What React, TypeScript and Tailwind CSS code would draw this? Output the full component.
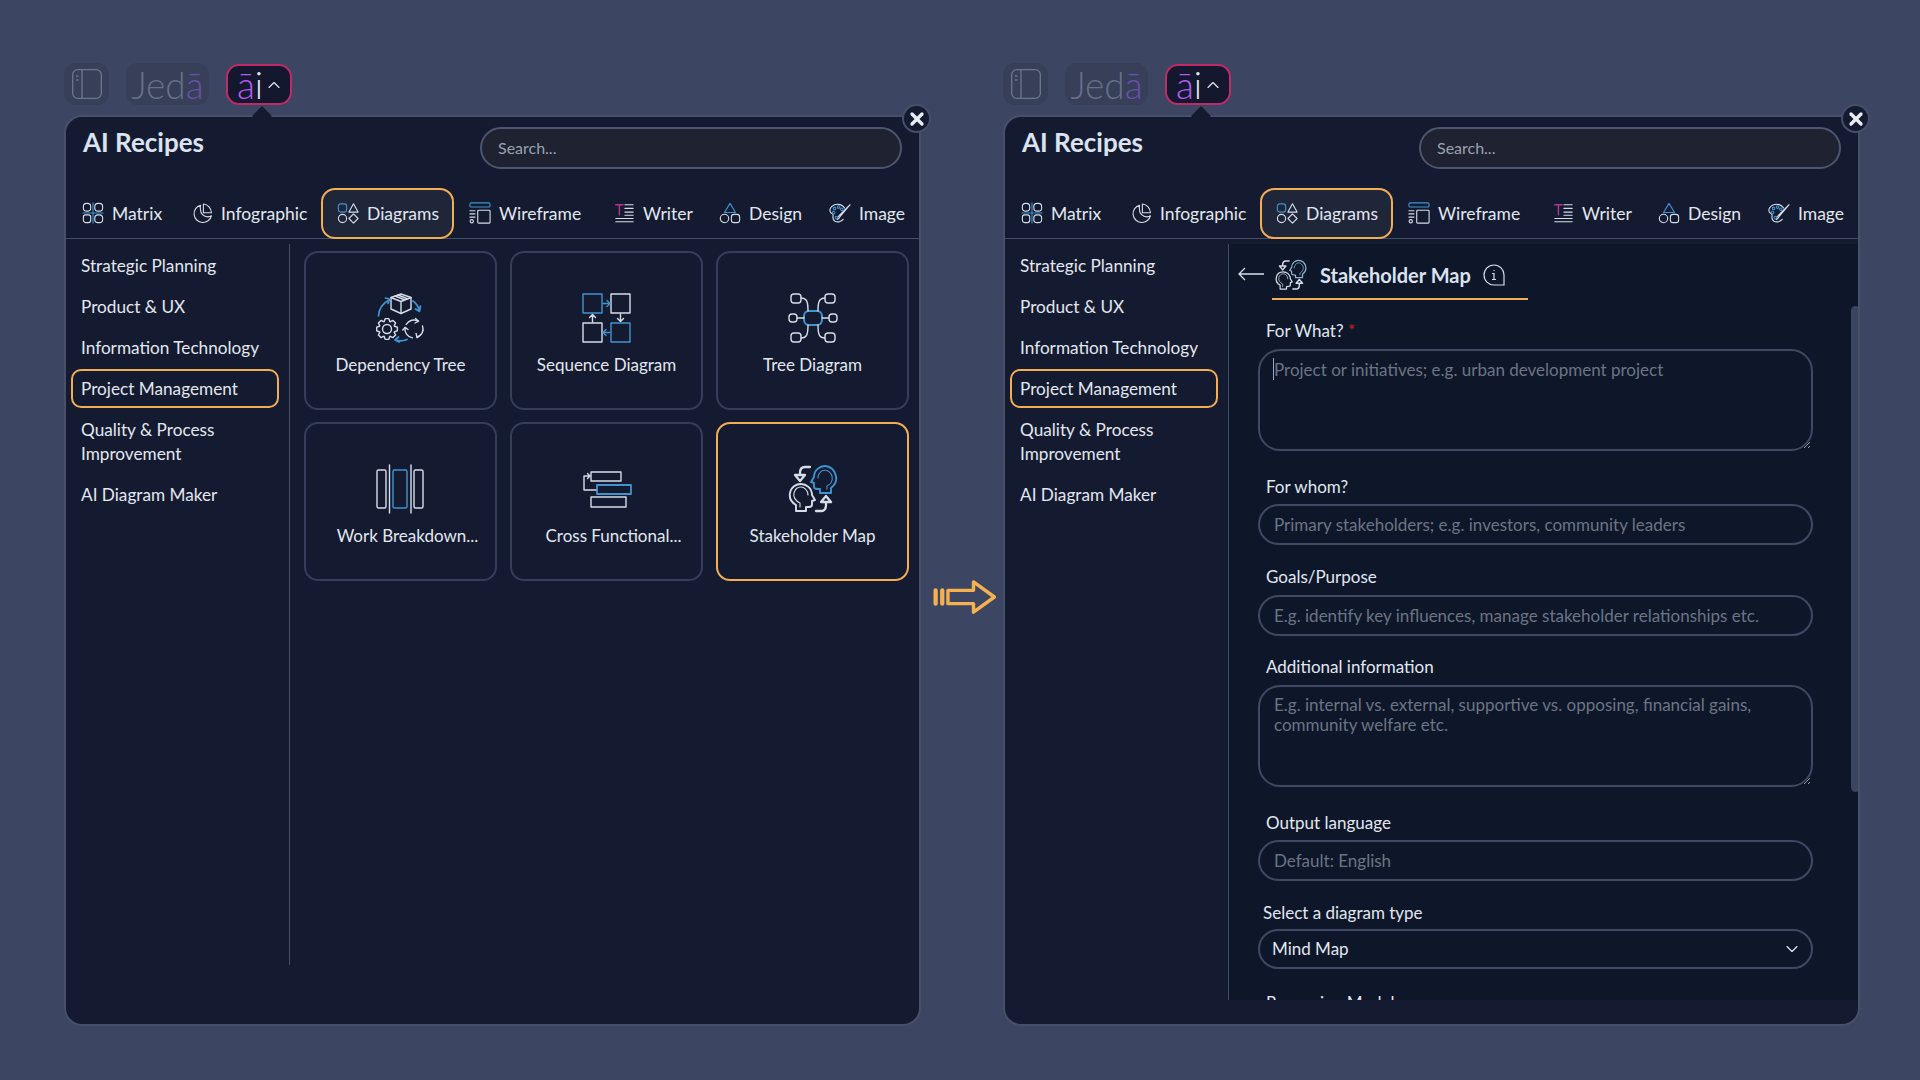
import { ChevronDown, ChevronUp, X } from "lucide-react"
import type { ReactNode } from "react"

const BLUE = "#3f93cf"
const WHITE = "#d6dde9"

function Ic({ size = 22, children }: { size?: number; children: ReactNode }) {
  return (
    <svg width={size} height={size} viewBox="0 0 24 24" fill="none" stroke={WHITE} strokeWidth="1.2" strokeLinecap="round" strokeLinejoin="round" className="shrink-0">
      {children}
    </svg>
  )
}

const MatrixIcon = () => (
  <Ic>
    <rect x="1.5" y="1.5" width="8" height="8.5" rx="3.5" />
    <rect x="14" y="1.5" width="8.5" height="8.5" rx="3.5" />
    <rect x="1.5" y="14" width="8" height="8.5" rx="2.5" />
    <rect x="14" y="14" width="8.5" height="8.5" rx="3.5" />
    <path d="M1 12h22M12 1v22" stroke={BLUE} />
  </Ic>
)
const InfographicIcon = () => (
  <Ic>
    <path d="M13.5 2.2a10 10 0 0 1 8.8 9.6h-8.8z" />
    <path d="M10.5 3.5a9.6 9.6 0 1 0 11.8 11.5 9 9 0 0 1-4 1.2 8 8 0 0 1-8-8 9 9 0 0 1 .2-4.7z" />
  </Ic>
)
const DiagramsIcon = () => (
  <Ic>
    <rect x="1.5" y="2" width="9" height="9" rx="2.5" stroke={BLUE} />
    <path d="M18 2l5 9H13z" />
    <circle cx="6" cy="18" r="4.5" />
    <path d="M18 13l5 5-5 5-5-5z" />
  </Ic>
)
const WireframeIcon = () => (
  <Ic>
    <rect x="1" y="1" width="22" height="4.5" rx="1.5" stroke={BLUE} />
    <rect x="9.5" y="9" width="13.5" height="14" rx="1" />
    <path d="M1 9.5h5.5M1 13h5.5M1 16.5h5.5" />
    <circle cx="3" cy="21" r="1.8" />
  </Ic>
)
const WriterIcon = () => (
  <Ic>
    <path d="M3 3h8M7 3v11" stroke="#b5348f" strokeWidth="1.6" />
    <path d="M13 3h9M13 7h9M13 11h9M13 14.5h9M3 18h19M3 21.5h19" />
  </Ic>
)
const DesignIcon = () => (
  <Ic>
    <path d="M12 1.5l6 10H6z" stroke={BLUE} />
    <circle cx="6" cy="18" r="4.6" />
    <rect x="13.5" y="13.5" width="9" height="9" rx="3" />
  </Ic>
)
const ImageIcon = () => (
  <Ic>
    <path d="M17 6.5C15 3 10 1.5 6 3S0 8 1.5 11c1 2 3 1.500 3 3.500S3 19 6.500 21c3 1.500 7 .5 9-2" />
    <path d="M23 3l-11 13c-.5 1.500-1 2.500-3 3 0-2 .5-3 2-4z" />
    <circle cx="6" cy="7" r="1.400" stroke={BLUE} />
    <circle cx="10.500" cy="5.500" r="1.400" stroke={BLUE} />
    <circle cx="14" cy="8" r="1.400" stroke={BLUE} />
    <circle cx="5" cy="11.500" r="1.400" stroke={BLUE} />
    <circle cx="8" cy="17" r="1.400" stroke={BLUE} />
  </Ic>
)

function Big({ children }: { children: ReactNode }) {
  return (
    <svg width="50" height="50" viewBox="0 0 50 50" fill="none" stroke={WHITE} strokeWidth="1.4" strokeLinecap="round" strokeLinejoin="round" className="shrink-0">
      {children}
    </svg>
  )
}

// outline of a cog with 8 teeth
function gearPath(cx: number, cy: number, outer: number, inner: number) {
  const pts: string[] = []
  for (let i = 0; i < 8; i++) {
    const a = (i * Math.PI) / 4
    const step = Math.PI / 8
    const list: [number, number][] = [
      [inner, a - step * 0.9],
      [outer, a - step * 0.45],
      [outer, a + step * 0.45],
      [inner, a + step * 0.9],
    ]
    list.forEach(([r, t]) => pts.push(`${(cx + r * Math.cos(t)).toFixed(2)} ${(cy + r * Math.sin(t)).toFixed(2)}`))
  }
  return `M${pts.join("L")}z`
}

const DependencyIcon = () => (
  <Big>
    <path d="M25 1l10 3.500v11.500L25 20.500 15 16V4.500z" />
    <path d="M15 4.500l10 4 10-4M25 8.500v12M19 3l10 4M22 2l10 4" />
    <path d="M13 7C7 10 3 16 2.500 23" stroke={BLUE} strokeWidth="1.700" />
    <path d="M9.500 5L13.500 6 12 10.500" stroke={BLUE} strokeWidth="1.700" />
    <path d="M37 8c3.500 2.500 5.500 6 6.500 10M44.500 13l-1 5.500-4-2.500" stroke={BLUE} strokeWidth="1.700" />
    <path d="M31 46.500c-4 1.800-8 1.800-12 .3M22.500 44l-3.500 3 4 2" stroke={BLUE} strokeWidth="1.700" />
    <path d={gearPath(11, 36, 10.500, 8)} />
    <circle cx="11" cy="36" r="4.500" />
    <path d="M30.200 31.500A9 9 0 0 1 42.500 28.200M46.500 32.900A9 9 0 0 1 41.100 44.500M36.400 44.900A9 9 0 0 1 29.100 34.400" />
    <path d="M39.500 25.500l3 2.700-3.500 1.800M45 41.500l-3.900 3-1-4M26.800 37l2.300-2.600 2.900 2.100" />
  </Big>
)
const SequenceIcon = () => (
  <Big>
    <rect x="1" y="1" width="19" height="19" stroke={BLUE} />
    <rect x="29" y="1" width="19" height="19" />
    <rect x="1" y="30" width="19" height="19" />
    <rect x="29" y="30" width="19" height="19" stroke={BLUE} />
    <path d="M21 10.500h7M25 7.500l3 3-3 3" stroke={BLUE} />
    <path d="M38.500 21v7.500M35.500 25.500l3 3 3-3" />
    <path d="M10.500 29v-7.500M7.500 24.500l3-3 3 3" />
    <path d="M28 39.500h-7M24 36.500l-3 3 3 3" stroke={BLUE} />
  </Big>
)
const TreeIcon = () => (
  <Big>
    <rect x="3" y="1" width="10" height="9" rx="3" />
    <rect x="37" y="1" width="10" height="9" rx="3" />
    <rect x="1" y="21" width="8" height="8" rx="3" />
    <rect x="41" y="21" width="8" height="8" rx="3" />
    <rect x="3" y="40" width="10" height="9" rx="3" />
    <rect x="37" y="40" width="10" height="9" rx="3" />
    <rect x="16" y="18" width="18" height="14" rx="5" stroke={BLUE} strokeWidth="2" />
    <path d="M13 5c6 0 7 4 7 13M37 5c-6 0-7 4-7 13M13 45c6 0 7-4 7-13M37 45c-6 0-7-4-7-13M9 25h7M41 25h-7" />
  </Big>
)
const WorkIcon = () => (
  <Big>
    <rect x="1" y="6" width="9" height="38" rx="1.500" />
    <rect x="17" y="6" width="14" height="38" rx="1.500" stroke={BLUE} />
    <rect x="38" y="6" width="9" height="38" rx="1.500" />
    <path d="M13.500 1v48M35 1v48" />
  </Big>
)
const CrossIcon = () => (
  <Big>
    <rect x="9" y="8" width="30" height="9" />
    <rect x="15" y="21" width="34" height="9" stroke={BLUE} strokeWidth="1.800" />
    <rect x="9" y="33" width="35" height="10" />
    <path d="M2 12v14h12M2 12h6M5.500 9.500L8 12l-2.500 2.500" />
  </Big>
)
const StakeholderIcon = ({ size = 50, dim = false }: { size?: number; dim?: boolean }) => (
  <svg width={size} height={size} viewBox="0 0 50 50" fill="none" stroke={WHITE} strokeWidth="1.900" strokeLinecap="round" strokeLinejoin="round" className="shrink-0">
    <path d="M8 47v-6C3 38 1 34 2 29c1-6 6-9 11-9s11 4 11 11l3 5-3 1v4c0 2-2 2-6 2v4z" />
    <path d="M12 43v-4c-4-2-7-5-6-10 1-4 4-6 7-6s7 3 7 8" strokeWidth="1.100" />
    <path d="M43 29v-5c4-3 6-7 5-12-1-6-6-10-11-10S26 6 26 13l-3 5 3 1v4c0 2 2 2 6 2v4z" stroke={dim ? "#8fb8d0" : BLUE} />
    <path d="M39 25v-3c4-2 6-6 5-10-1-3-4-6-7-6s-7 3-7 8" stroke={dim ? "#8fb8d0" : BLUE} strokeWidth="1.100" />
    <path d="M22 3h-5c-3 0-5 2-5 6v2M7 11l5 6 5-6z" strokeWidth="2.300" />
    <path d="M28 47h5c3 0 5-2 5-6v-3M33 38l5-6 5 6z" strokeWidth="2.300" />
  </svg>
)

const tabs = [
  { name: "Matrix", icon: <MatrixIcon />, w: "w-[109px]" },
  { name: "Infographic", icon: <InfographicIcon />, w: "w-[130px]" },
  { name: "Diagrams", icon: <DiagramsIcon />, w: "w-[148px]", active: true },
  { name: "Wireframe", icon: <WireframeIcon />, w: "w-[144px]" },
  { name: "Writer", icon: <WriterIcon />, w: "w-[106px]" },
  { name: "Design", icon: <DesignIcon />, w: "w-[110px]" },
  { name: "Image", icon: <ImageIcon />, w: "w-[90px]" },
]

const recipes = [
  { name: "Dependency Tree", icon: <DependencyIcon /> },
  { name: "Sequence Diagram", icon: <SequenceIcon /> },
  { name: "Tree Diagram", icon: <TreeIcon /> },
  { name: "Work Breakdown...", icon: <WorkIcon />, shift: true },
  { name: "Cross Functional...", icon: <CrossIcon />, shift: true },
  { name: "Stakeholder Map", icon: <StakeholderIcon />, active: true },
]

function TopBar() {
  return (
    <div className="flex h-[42px] items-center">
      <div className="flex h-[42px] w-[45px] items-center justify-center rounded-xl bg-[#373f59]">
        <svg width="30" height="30" viewBox="0 0 30 30" fill="none" stroke="#6b7890" strokeWidth="1.300">
          <rect x="0.700" y="0.700" width="28.600" height="28.600" rx="5" />
          <path d="M10 1v28M4 7h2.500M4 11h2.500" />
        </svg>
      </div>
      <div className="ml-[17px] flex h-[42px] w-[83px] items-center justify-center rounded-xl bg-[#373f59] text-[37px] font-light leading-none text-[#66708a]">
        Jed<span className="text-[#6a4fae]">ā</span>
      </div>
      <div className="ml-[17px] flex h-[41px] w-[66px] items-center justify-center rounded-[13px] border-2 border-[#c02a68] bg-[#14182e] pl-[3px] text-[37px] font-light leading-none text-[#e5e7eb]">
        <span className="text-[#b25cf0]">ā</span>i
        <ChevronUp size={20} strokeWidth={1.400} className="ml-px mt-px" />
      </div>
    </div>
  )
}

function Tabs() {
  return (
    <div className="flex h-[51px] items-center border-b border-[#444e68] pl-[16px] text-[17.500px] text-[#e2e7ef]">
      {tabs.map((t) =>
        t.active ? (
          <div key={t.name} className={t.w}>
            <div className="flex h-[51px] w-[133px] items-center gap-[8px] rounded-[14px] border-2 border-[#f3ad55] bg-[#20263a] pl-[14px]">
              {t.icon}
              <span className="pt-[3px]">{t.name}</span>
            </div>
          </div>
        ) : (
          <div key={t.name} className={`${t.w} flex items-center gap-[8px]`}>
            {t.icon}
            <span className="pt-[3px]">{t.name}</span>
          </div>
        ),
      )}
    </div>
  )
}

function Sidebar({ narrow }: { narrow?: boolean }) {
  return (
    <div className={`${narrow ? "h-[756px]" : "h-[721px]"} w-[224px] shrink-0 border-r border-[#444e68] pt-px text-[17.200px] text-[#e2e7ef]`}>
      <div className="flex h-[41px] items-center pl-[15px]">Strategic Planning</div>
      <div className="flex h-[41px] items-center pl-[15px]">Product &amp; UX</div>
      <div className="flex h-[41px] items-center pl-[15px]">Information Technology</div>
      <div className="ml-[5px] mt-px flex h-[39px] w-[208px] items-center rounded-[10px] border-2 border-[#f3ad55] pl-[8px]">Project Management</div>
      <div className="flex h-[67px] items-center pl-[15px] leading-[24px]">
        Quality &amp; Process
        <br />
        Improvement
      </div>
      <div className="flex h-[40px] items-center pl-[15px]">AI Diagram Maker</div>
    </div>
  )
}

function Panel({ children }: { children: ReactNode }) {
  return (
    <div className="relative mt-[10px] h-[911px] rounded-[18px] border-2 border-[#465069] bg-[#141b30]">
      <div className="absolute -top-[8px] left-[189px] h-[14px] w-[14px] rotate-45 bg-[#141b30]" />
      <div className="absolute -right-[12px] -top-[13px] z-10 flex h-[29px] w-[29px] items-center justify-center rounded-full border-2 border-[#454f6a] bg-[#141b30] text-[#e8edf4]">
        <X size={20} strokeWidth={4} />
      </div>
      <div className="relative flex h-[71px] items-start pl-[17px] pt-[9px]">
        <h1 className="text-[26px] font-bold leading-[32px] text-[#dbe2f0]">AI Recipes</h1>
        <div className="absolute left-[414px] top-[10px] flex h-[42px] w-[422px] items-center rounded-full border-2 border-[#4d566e] bg-[#1e2231] pl-[16px] text-[16px] text-[#9aa2b1]">
          Search...
        </div>
      </div>
      {children}
    </div>
  )
}

function Field({ label, mt, children, cls = "pl-[8px]" }: { label: ReactNode; mt: string; children: ReactNode; cls?: string }) {
  return (
    <>
      <div className={`${mt} ${cls} h-[20px] text-[17px] leading-[20px] text-[#e2e7ef]`}>{label}</div>
      {children}
    </>
  )
}

const boxCls =
  "block w-[555px] border-2 border-[#3f4963] bg-transparent pl-[14px] pr-[14px] text-[17px] text-[#e2e7ef] outline-none placeholder:text-[#6c7484]"

function Form() {
  return (
    <div className="flex h-[756px] flex-1 overflow-hidden bg-[#0e172a]">
      <div className="w-[621px] shrink-0 overflow-hidden">
        <div className="flex h-[56px] items-start pl-[9px]">
          <svg width="26" height="14" viewBox="0 0 26 14" fill="none" stroke={WHITE} strokeWidth="1.300" className="mt-[23px] shrink-0">
            <path d="M26 7H1M7 1L1 7l6 6" />
          </svg>
          <div className="ml-[8px] flex h-[56px] w-[256px] items-center border-b-2 border-[#f3ad55] pl-[3px] pt-[7px]">
            <StakeholderIcon size={32} dim />
            <span className="ml-[13px] text-[20px] font-bold text-[#dbe2f0]">Stakeholder Map</span>
            <svg width="22" height="22" viewBox="0 0 22 22" fill="none" stroke={WHITE} strokeWidth="1.200" className="ml-auto mr-[23px] shrink-0">
              <path d="M11 1a10 10 0 1 0 0 20h10V11A10 10 0 0 0 11 1z" />
              <path d="M9 9.500h2v6M9 15.500h4M11 6v1" />
            </svg>
          </div>
        </div>
        <div className="pl-[29px]">
          <Field mt="mt-[21px]" label={<>For What? <span className="text-[#d01f2f]">*</span></>}>
            <div className="relative mt-[8px]">
              <textarea className={`${boxCls} h-[102px] rounded-[22px] pt-[6px]`} placeholder="Project or initiatives; e.g. urban development project" />
              <span className="absolute left-[15px] top-[9px] h-[22px] w-px bg-[#9aa7bb]" />
            </div>
          </Field>
          <Field mt="mt-[26px]" label="For whom?">
            <input className={`${boxCls} mt-[7px] h-[41px] rounded-full`} placeholder="Primary stakeholders; e.g. investors, community leaders" />
          </Field>
          <Field mt="mt-[22px]" label="Goals/Purpose">
            <input className={`${boxCls} mt-[8px] h-[41px] rounded-full`} placeholder="E.g. identify key influences, manage stakeholder relationships etc." />
          </Field>
          <Field mt="mt-[21px]" label="Additional information">
            <textarea className={`${boxCls} mt-[8px] h-[102px] rounded-[22px] pt-[8px] leading-[20px]`} placeholder="E.g. internal vs. external, supportive vs. opposing, financial gains, community welfare etc." />
          </Field>
          <Field mt="mt-[26px]" label="Output language">
            <input className={`${boxCls} mt-[7px] h-[41px] rounded-full`} placeholder="Default: English" />
          </Field>
          <Field mt="mt-[22px]" cls="pl-[5px]" label="Select a diagram type">
            <div className="mt-[6px] flex h-[40px] w-[555px] items-center justify-between rounded-full border-2 border-[#3f4963] pl-[12px] pr-[9px] text-[17px] text-[#e2e7ef]">
              Mind Map
              <ChevronDown size={20} strokeWidth={1.400} />
            </div>
          </Field>
          <Field mt="mt-[24px]" label="Reasoning Model">
            <div />
          </Field>
        </div>
      </div>
      <div className="ml-[1px] mt-[62px] h-[486px] w-[9px] shrink-0 rounded-full bg-[#3a4560]" />
    </div>
  )
}

function Grid() {
  return (
    <div className="grid grid-cols-[193px_193px_193px] grid-rows-[159px_159px] gap-x-[13px] gap-y-[12px] pl-[14px] pt-[7px]">
      {recipes.map((r) => (
        <div
          key={r.name}
          className={`flex flex-col items-center rounded-[14px] border-2 pt-[40px] text-[17px] text-[#e2e7ef] ${r.active ? "border-[#f3ad55]" : "border-[#343e58]"}`}
        >
          {r.icon}
          <span className={`mt-[9px] ${r.shift ? "pl-[14px]" : ""}`}>{r.name}</span>
        </div>
      ))}
    </div>
  )
}

export default function App() {
  return (
    <div className="flex h-[1080px] w-[1920px] bg-[#3c4561] pl-[64px] pt-[63px] [font-family:Lato,sans-serif]">
      <div className="w-[857px] shrink-0">
        <TopBar />
        <Panel>
          <Tabs />
          <div className="mt-[5px] flex">
            <Sidebar />
            <Grid />
          </div>
        </Panel>
      </div>
      <div className="flex w-[82px] shrink-0 justify-center pl-[6px] pt-[516px]">
        <svg width="64" height="36" viewBox="0 0 66 38" fill="none" stroke="#f5b04f" strokeWidth="3.600" strokeLinecap="round" strokeLinejoin="round">
          <path d="M2 12v14M9 12v14" strokeWidth="4.500" />
          <path d="M15 12h27V3l22 16-22 16v-9H15z" />
        </svg>
      </div>
      <div className="w-[857px] shrink-0">
        <TopBar />
        <Panel>
          <Tabs />
          <div className="mt-[5px] flex">
            <Sidebar narrow />
            <Form />
          </div>
        </Panel>
      </div>
    </div>
  )
}
